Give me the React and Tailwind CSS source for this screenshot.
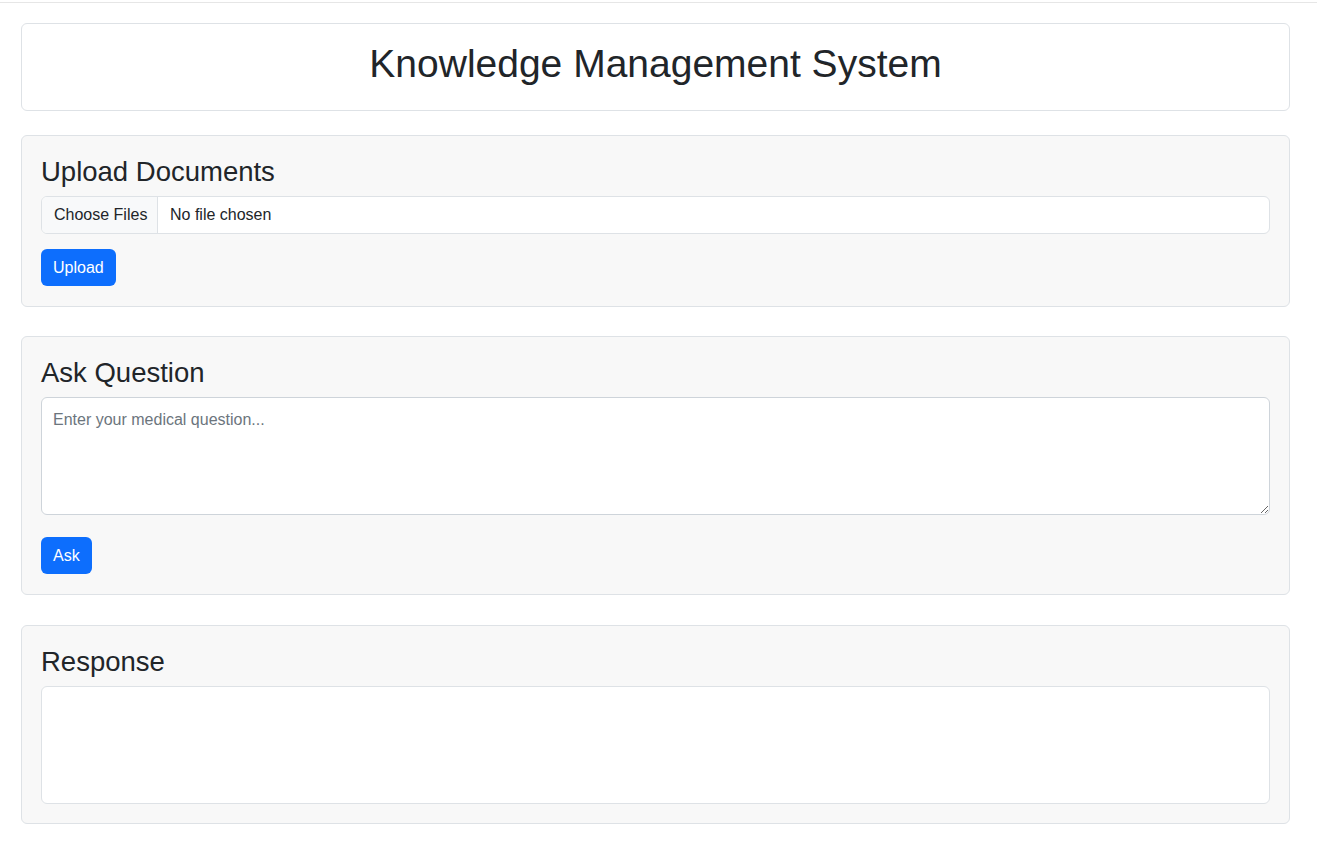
import React from "react";

export default function App() {
  return (
    <div className="min-h-[867px] bg-white text-[#212529]" style={{ fontFamily: '"Liberation Sans", Arial, sans-serif' }}>
      <div className="h-[2px]" />
      <div className="h-px bg-[#e6e6e6]" />
      <div className="pl-[21px] pr-[27px] pt-[20px] flex flex-col">
        <div className="border border-[#dee2e6] rounded-[6px] bg-white h-[88px] flex items-center justify-center">
          <h1 className="text-[39px] leading-[48px] font-normal -mt-[6px]">Knowledge Management System</h1>
        </div>

        <div className="mt-[24px] border border-[#dee2e6] rounded-[6px] bg-[#f8f8f8] px-[19px] pt-[19px] pb-[20px]">
          <h3 className="text-[27.5px] leading-[34px] font-normal mb-[7px]">Upload Documents</h3>
          <div className="flex h-[38px] border border-[#dee2e6] rounded-[6px] bg-white overflow-hidden text-[16px]">
            <div className="w-[116px] shrink-0 pl-[12px] flex items-center bg-[#f8f9fa] border-r border-[#dee2e6] whitespace-nowrap">Choose Files</div>
            <div className="pl-[12px] flex items-center">No file chosen</div>
          </div>
          <button className="mt-[15px] h-[37px] px-[12px] rounded-[6px] bg-[#0d6efd] text-white text-[16px]">Upload</button>
        </div>

        <div className="mt-[29px] border border-[#dee2e6] rounded-[6px] bg-[#f8f8f8] px-[19px] pt-[19px] pb-[20px]">
          <h3 className="text-[27.5px] leading-[34px] font-normal mb-[7px]">Ask Question</h3>
          <textarea
            className="block w-full h-[118px] border border-[#ced4da] rounded-[6px] bg-white px-[11px] py-[10px] text-[16px] placeholder:text-[#6c757d] outline-none resize-y"
            style={{ fontFamily: '"Liberation Sans", Arial, sans-serif' }}
            placeholder="Enter your medical question..."
          />
          <button className="mt-[22px] h-[37px] px-[12px] rounded-[6px] bg-[#0d6efd] text-white text-[16px]">Ask</button>
        </div>

        <div className="mt-[30px] border border-[#dee2e6] rounded-[6px] bg-[#f8f8f8] px-[19px] pt-[19px] pb-[19px]">
          <h3 className="text-[27.5px] leading-[34px] font-normal mb-[7px]">Response</h3>
          <div className="h-[118px] border border-[#dee2e6] rounded-[6px] bg-white" />
        </div>
      </div>
    </div>
  );
}
